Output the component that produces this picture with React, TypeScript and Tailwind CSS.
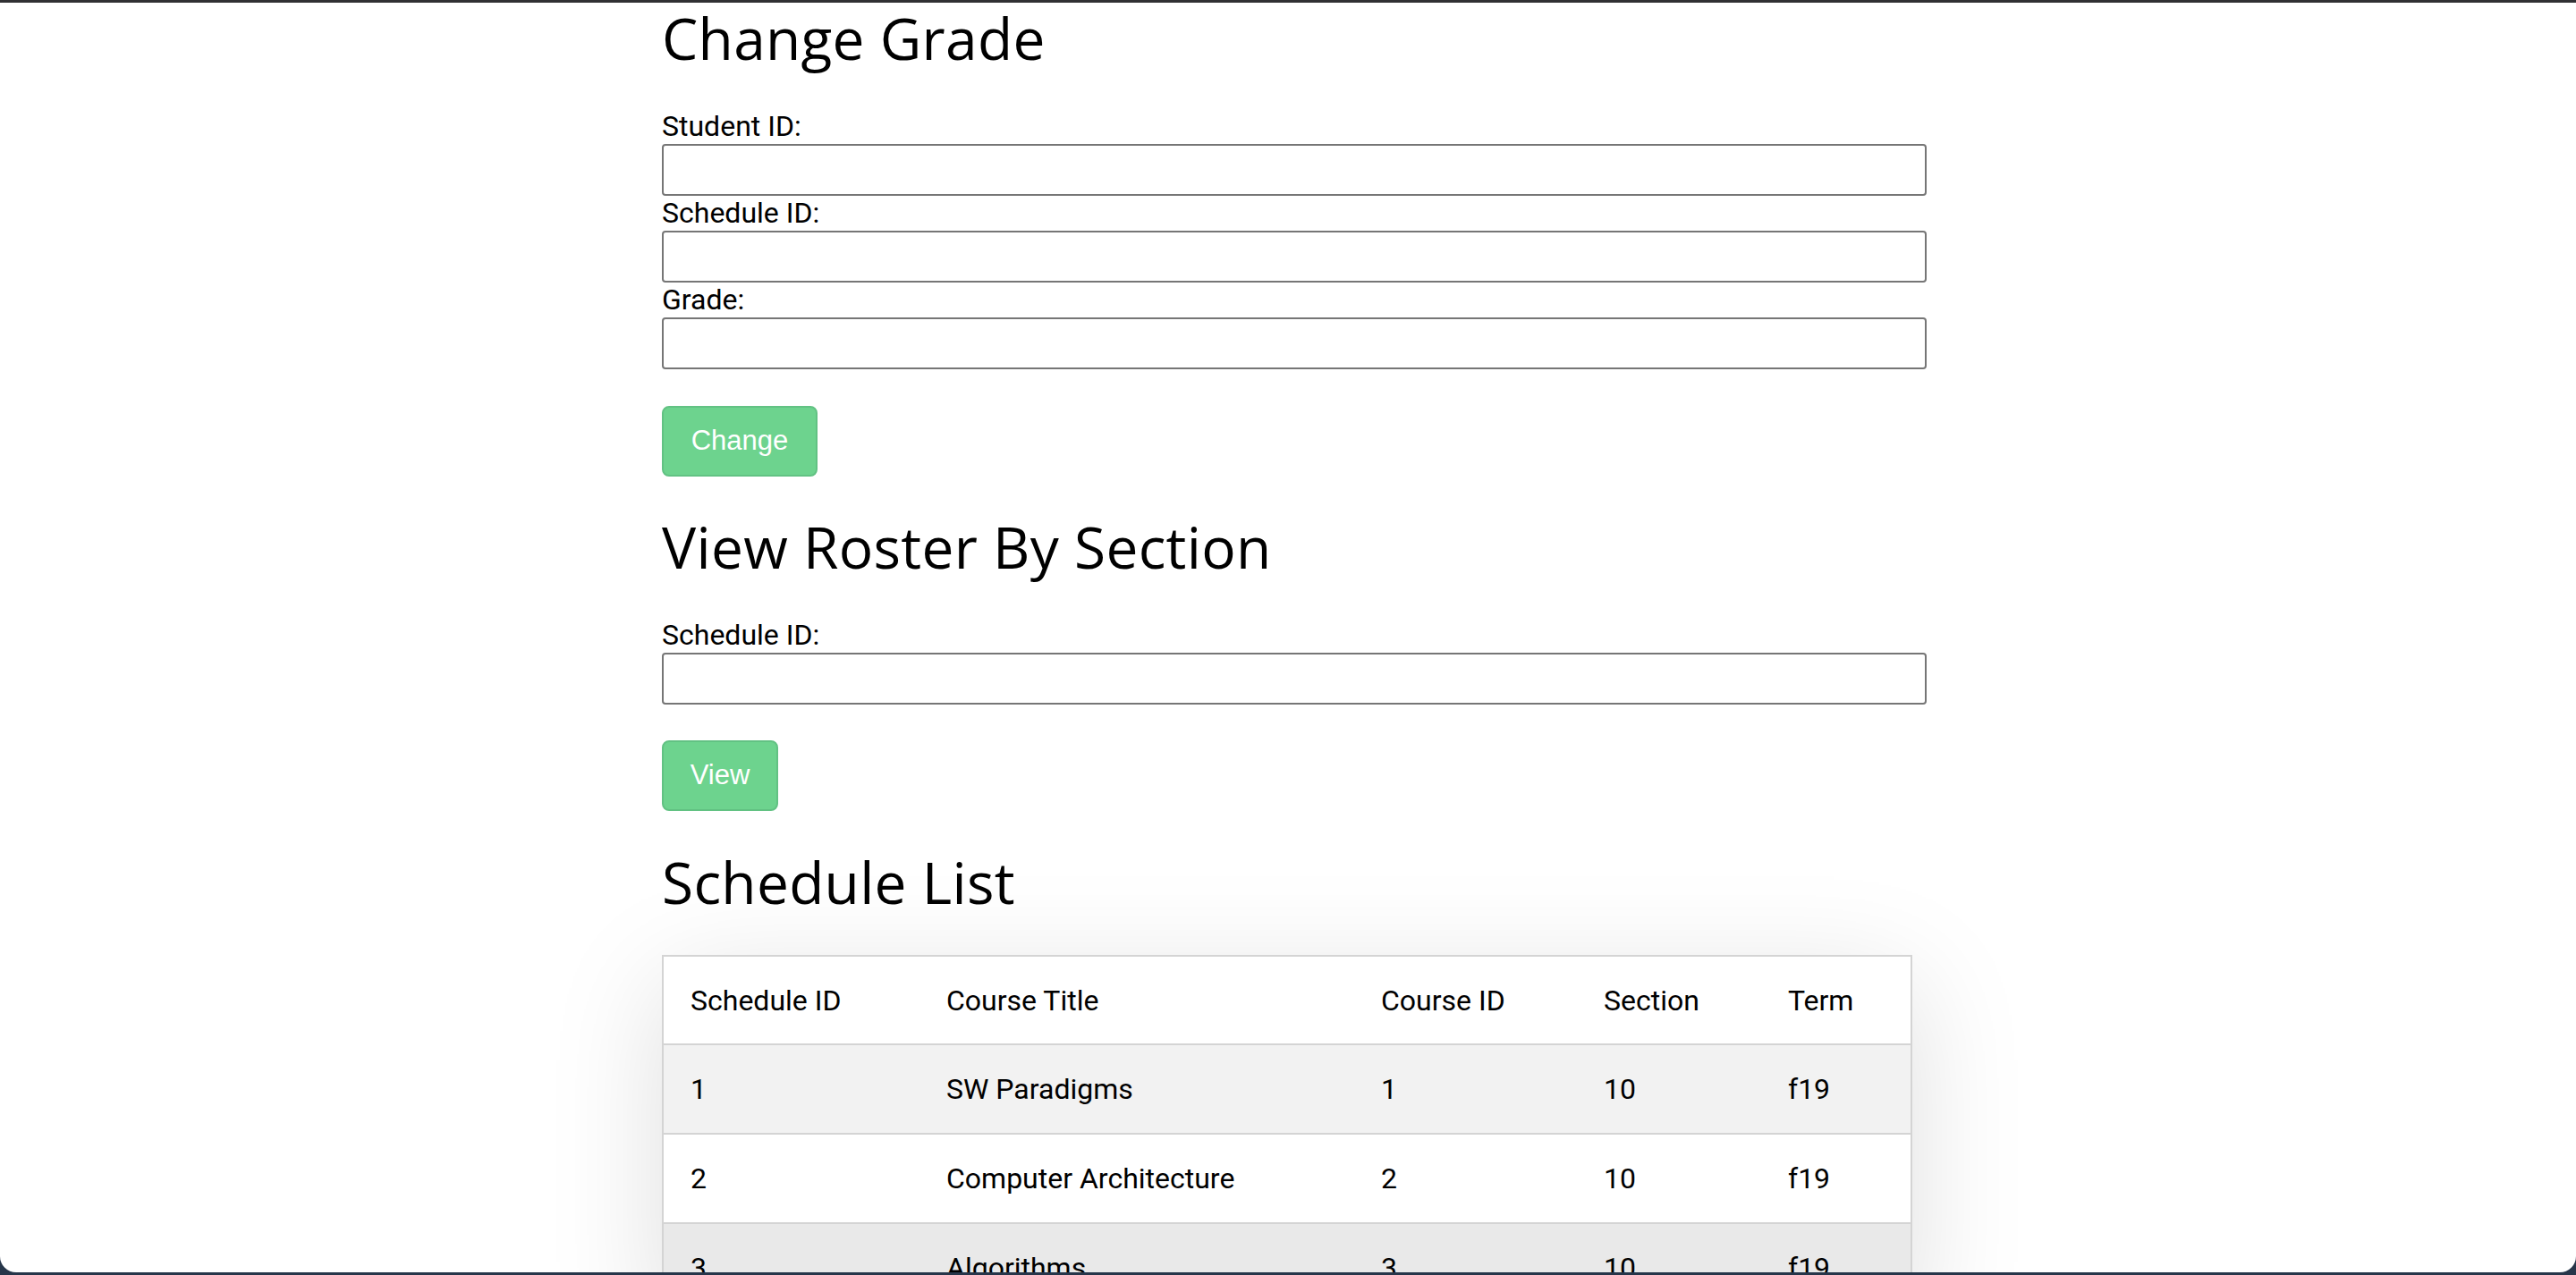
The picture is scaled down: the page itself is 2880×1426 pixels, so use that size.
import React from 'react'

const rows = [
  { id: '1', title: 'SW Paradigms', course: '1', section: '10', term: 'f19' },
  { id: '2', title: 'Computer Architecture', course: '2', section: '10', term: 'f19' },
  { id: '3', title: 'Algorithms', course: '3', section: '10', term: 'f19' },
]

const Field = (props: { label: string }) => {
  return (
    <div className="flex flex-col gap-[1px]">
      <label className="text-[32px] leading-[38px] text-black">{props.label}</label>
      <input type="text" className="h-[58px] w-[1414px] rounded-[4px] border-2 border-[#767676] bg-white px-3 text-[32px] outline-none" />
    </div>
  )
}

const GreenButton = (props: { text: string; width: string }) => {
  return (
    <button className={`${props.width} h-[79px] rounded-[8px] border-2 border-[#62c283] bg-[#6dd38e] text-center text-[31px] text-white`} style={{ fontFamily: '"Liberation Sans", Arial, sans-serif' }}>
      {props.text}
    </button>
  )
}

const Heading = (props: { text: string; className?: string }) => {
  return (
    <h2 className={`text-[64px] leading-[76px] font-normal tracking-[0.3px] text-black ${props.className ?? ''}`} style={{ fontFamily: '"Open Sans", sans-serif' }}>
      {props.text}
    </h2>
  )
}

const cols = ['w-[286px]', 'w-[486px]', 'w-[249px]', 'w-[206px]', 'w-[167px]']

const Row = (props: { cells: string[]; className: string; height: string }) => {
  return (
    <div className={`flex ${props.height} ${props.className}`}>
      {props.cells.map((c, i) => (
        <div key={i} className={`${cols[i]} flex items-center pl-[30px]`}>
          {c}
        </div>
      ))}
    </div>
  )
}

const ScheduleTable = () => {
  return (
    <div className="w-[1398px] border-2 border-[#d4d4d4] bg-white text-[32px] text-black shadow-[0_30px_120px_rgba(0,0,0,0.13)]">
      <Row cells={['Schedule ID', 'Course Title', 'Course ID', 'Section', 'Term']} className="bg-white" height="h-[97px]" />
      {rows.map((r, i) => (
        <Row
          key={r.id}
          cells={[r.id, r.title, r.course, r.section, r.term]}
          className={`border-t-2 border-[#d4d4d4] ${i % 2 === 0 ? (i === 2 ? 'bg-[#e9e9e9]' : 'bg-[#f2f2f2]') : 'bg-white'}`}
          height="h-[100px]"
        />
      ))}
    </div>
  )
}

export default function App() {
  return (
    <div className="flex h-[1426px] w-[2880px] flex-col overflow-hidden bg-[#27364a]" style={{ fontFamily: 'Roboto, "Noto Sans", sans-serif' }}>
      <div className="h-[3px] bg-[#303033]" />
      <div className="flex-1 overflow-hidden rounded-b-[18px] bg-white">
        <div className="ml-[740px] flex flex-col items-start pt-[2px]">
          <Heading text="Change Grade" />
          <div className="mt-[41px] flex flex-col">
            <Field label="Student ID:" />
            <Field label="Schedule ID:" />
            <Field label="Grade:" />
          </div>
          <div className="mt-[41px]">
            <GreenButton text="Change" width="w-[174px]" />
          </div>
          <Heading text="View Roster By Section" className="mt-[41px]" />
          <div className="mt-[41px]">
            <Field label="Schedule ID:" />
          </div>
          <div className="mt-[40px]">
            <GreenButton text="View" width="w-[130px]" />
          </div>
          <Heading text="Schedule List" className="mt-[42px]" />
          <div className="mt-[43px]">
            <ScheduleTable />
          </div>
        </div>
      </div>
      <div className="h-[3px]" />
    </div>
  )
}
